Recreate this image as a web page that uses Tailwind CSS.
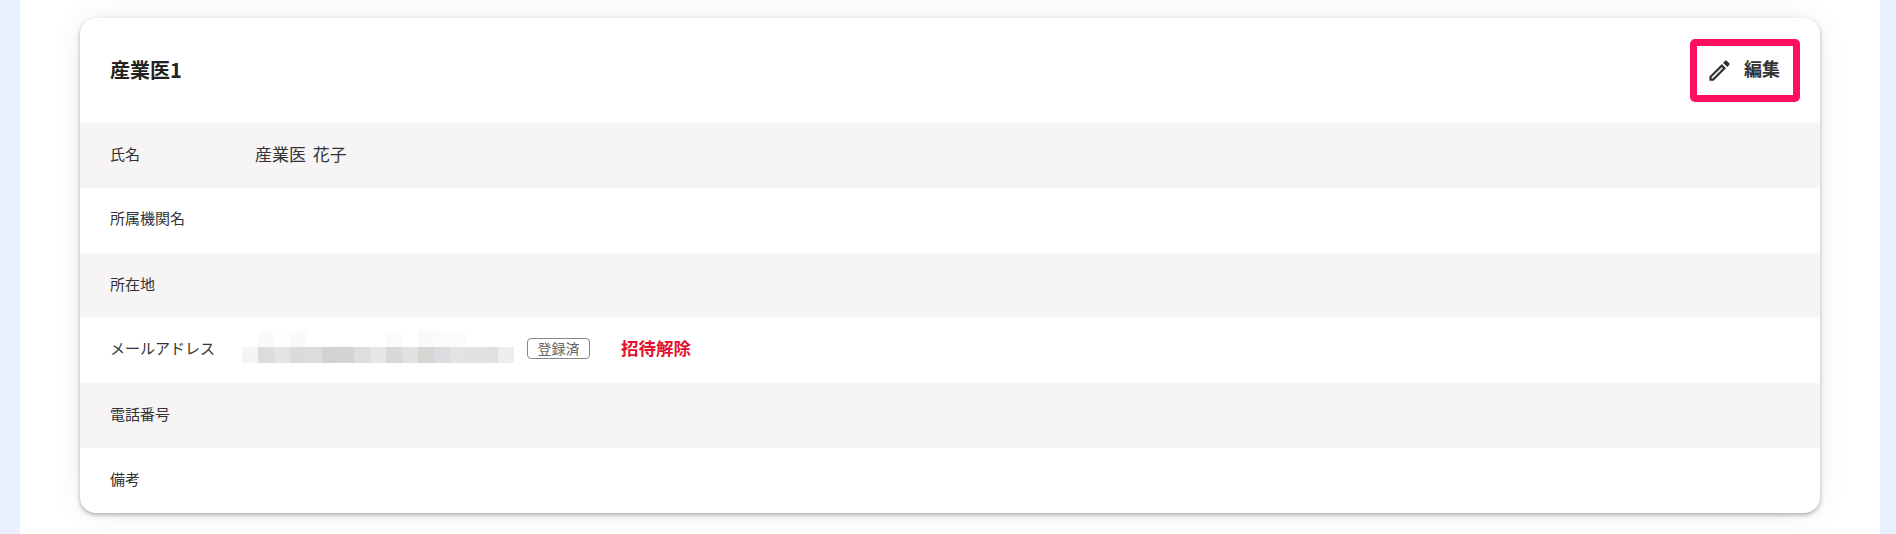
<!DOCTYPE html>
<html lang="ja">
<head>
  <meta charset="UTF-8">
  <title>産業医</title>
  <script src="https://cdn.jsdelivr.net/npm/@tailwindcss/browser@4"></script>
</head>
<body class="bg-[#e9f1fe] font-['Noto_Sans_CJK_JP','Noto_Sans',sans-serif] text-[#333]">
  <div class="ml-[20px] mr-[16px] h-[534px] overflow-hidden bg-white px-[60px] pt-[18px]">
    <section class="overflow-hidden rounded-[16px] bg-white shadow-[0_2px_4px_rgba(0,0,0,0.3),0_0_30px_rgba(0,0,0,0.07)]">
      <!-- header -->
      <div class="flex h-[105px] items-center justify-between pl-[30px] pr-[20px]">
        <h2 class="pb-[2px] text-[20px] font-bold text-[#222]">産業医1</h2>
        <button class="mt-[-1px] flex h-[63px] w-[110px] items-center rounded-[5px] border-[7px] border-[#ff0f5f] pl-[9px]">
          <svg class="h-[27px] w-[27px]" viewBox="0 0 24 24" fill="#333"><path d="M3 17.25V21h3.75L17.81 9.94l-3.75-3.75L3 17.25zM5.92 19H5v-.92l9.06-9.06.92.92L5.92 19zM20.71 5.63l-2.34-2.34c-.2-.2-.45-.29-.71-.29s-.51.1-.7.28l-1.83 1.83 3.75 3.75 1.83-1.83c.39-.39.39-1.02 0-1.41z"/></svg>
          <span class="ml-[11px] pb-[4px] text-[18px] font-bold">編集</span>
        </button>
      </div>
      <!-- rows -->
      <div class="flex h-[65px] items-center bg-[#f6f4f5] pb-[3px] pl-[30px]">
        <div class="w-[145px] text-[15px]">氏名</div>
        <div class="text-[17px] [word-spacing:3px]">産業医 花子</div>
      </div>
      <div class="flex h-[65px] items-center pb-[4px] pl-[30px]">
        <div class="w-[145px] text-[15px]">所属機関名</div>
      </div>
      <div class="flex h-[64px] items-center bg-[#f6f4f5] pb-[1px] pl-[30px]">
        <div class="w-[145px] text-[15px]">所在地</div>
      </div>
      <div class="flex h-[66px] items-center pl-[30px]">
        <div class="w-[145px] pb-[3px] text-[15px]">メールアドレス</div>
        <div class="mb-[6px] ml-[-13px] w-[272px]">
          <div class="grid h-[16px] grid-cols-17">
            <div></div><div class="bg-[#fafafa]"></div><div class="bg-[#fefefe]"></div><div class="bg-[#fafafa]"></div><div></div><div></div><div></div><div></div><div></div><div class="bg-[#fbfbfb]"></div><div></div><div class="bg-[#f9f9f9]"></div><div class="bg-[#fbfbfb]"></div><div class="bg-[#fbfbfb]"></div><div></div><div></div><div></div>
          </div>
          <div class="grid h-[16px] grid-cols-17">
            <div class="bg-[#f5f5f5]"></div><div class="bg-[#dcdcdc]"></div><div class="bg-[#e4e4e2]"></div><div class="bg-[#dadbdc]"></div><div class="bg-[#dbdcdc]"></div><div class="bg-[#d2d2d2]"></div><div class="bg-[#d4d4d3]"></div><div class="bg-[#dcdee0]"></div><div class="bg-[#e6e6e4]"></div><div class="bg-[#d6d8da]"></div><div class="bg-[#e0e1e1]"></div><div class="bg-[#d6d5d2]"></div><div class="bg-[#dadcdf]"></div><div class="bg-[#e3e3e3]"></div><div class="bg-[#e2e2e2]"></div><div class="bg-[#dfe0e0]"></div><div class="bg-[#ecedec]"></div>
          </div>
        </div>
        <span class="mb-[3px] ml-[13px] flex h-[21px] w-[63px] items-center justify-center rounded-[4px] border border-[#888] pb-[1px] text-[14px] text-[#666]">登録済</span>
        <a class="mb-[3px] ml-[31px] text-[17.5px] font-bold text-[#e3102e]">招待解除</a>
      </div>
      <div class="flex h-[65px] items-center bg-[#f6f4f5] pb-[3px] pl-[30px]">
        <div class="w-[145px] text-[15px]">電話番号</div>
      </div>
      <div class="flex h-[65px] items-center pb-[3px] pl-[30px]">
        <div class="w-[145px] text-[15px]">備考</div>
      </div>
    </section>
  </div>
</body>
</html>
